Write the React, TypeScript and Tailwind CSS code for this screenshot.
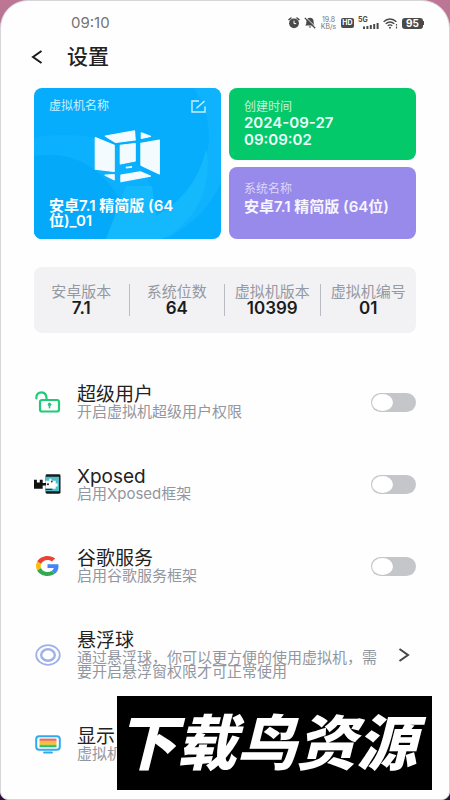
import type { ReactNode } from "react";

function AlarmIcon() {
  return (
    <svg width="12" height="12" viewBox="0 0 12 12" aria-hidden="true">
      <circle cx="6" cy="6.3" r="4.9" fill="#4a4a4a" />
      <path d="M1 2.6 3 1M11 2.6 9 1" stroke="#4a4a4a" strokeWidth="1.5" strokeLinecap="round" />
      <path d="M6 3.6v3h2.2" stroke="#fff" strokeWidth="1" fill="none" />
    </svg>
  );
}

function MutedBellIcon() {
  return (
    <svg width="12" height="12" viewBox="0 0 12 12" aria-hidden="true">
      <path d="M6 .8c2.3 0 3.6 1.6 3.6 3.8 0 2 .4 3 1.2 4H1.2c.8-1 1.2-2 1.2-4C2.4 2.4 3.7.8 6 .8z" fill="#4a4a4a" />
      <path d="M4.6 9.6h2.8L6 11z" fill="#4a4a4a" />
      <path d="M1.6.2 12 10.4" stroke="#fff" strokeWidth="1" />
      <path d="M.8.9 11.2 11.3" stroke="#4a4a4a" strokeWidth="1.3" />
    </svg>
  );
}

function SignalIcon() {
  return (
    <svg width="16" height="6" viewBox="0 0 16 6" fill="#4a4a4a" aria-hidden="true">
      <rect x="0" y="3.5" width="2" height="2.5" />
      <rect x="3.4" y="3" width="2" height="3" />
      <rect x="6.8" y="2" width="2" height="4" />
      <rect x="10.2" y="1" width="2" height="5" />
      <rect x="13.6" y="0" width="2" height="6" />
    </svg>
  );
}

function WifiIcon() {
  return (
    <svg width="15" height="11" viewBox="0 0 15 11" fill="none" stroke="#4a4a4a" strokeWidth="1.4" aria-hidden="true">
      <path d="M.6 3.7C4.4.1 9.6.1 13.4 3.7" />
      <path d="M2.7 5.8c2.6-2.3 6-2.3 8.6 0" />
      <path d="M4.7 7.8c1.500-1.200 3.100-1.200 4.600 0" />
      <circle cx="7" cy="9.7" r="1" fill="#4a4a4a" stroke="none" />
      <path d="M13.5 6v1.6M13.5 8.6v2" strokeWidth="1.2" />
    </svg>
  );
}

function EditIcon() {
  return (
    <svg width="15" height="13" viewBox="0 0 15 13" fill="none" stroke="#c9efff" strokeWidth="1.4" aria-hidden="true">
      <path d="M8 1H1v11h13V6.5" />
      <path d="M5.5 8.2 13.6 1" />
    </svg>
  );
}

function CubeLogo() {
  return (
    <svg width="68" height="54" viewBox="0 0 68 54" fill="#f3fbff" stroke="#f3fbff" strokeWidth="1.2" strokeLinejoin="round" aria-hidden="true">
      <path d="M1.3 8.6 20.2 16.2V42.5L1.3 40.2z" />
      <path d="M11.3 7 40.5 1.9 41.2 11 21.6 13.4z" />
      <path d="M47.3 3.9 56.5 7.4 47.3 9.4z" />
      <path d="M26.3 16.3 41.2 14.5V31.9L26.3 35z" />
      <path d="M46.9 14.3 65.3 11.2V45L46.9 36.3z" />
      <path d="M11 46.2 20.2 45.7V50.8z" />
      <path d="M26.9 46 46.3 42.9 56.5 47.1 26.9 52.6z" />
      <path d="M31.8 38.7 38 37.8" strokeWidth="1.8" />
    </svg>
  );
}

function UnlockIcon() {
  return (
    <svg width="26" height="22" viewBox="0 0 26 22" fill="none" stroke="#1fca78" strokeWidth="2.2" strokeLinecap="round" aria-hidden="true">
      <rect x="5" y="9" width="19" height="11.5" rx="2" />
      <path d="M1.4 7.5C1 3.2 3.6 1.4 6.6 1.4S11.6 3.2 11.6 8.5" />
      <circle cx="14.5" cy="13.4" r="1.3" fill="#1fca78" strokeWidth="1" />
      <path d="M14.5 14v2.8" strokeWidth="1.6" />
    </svg>
  );
}

function XposedIcon() {
  return (
    <svg width="28" height="22" viewBox="0 0 28 22" aria-hidden="true">
      <rect x="12" y="1" width="15.5" height="20" rx="1.5" fill="#171c1f" />
      <rect x="12" y="3.5" width="14" height="15" fill="#4fc0cb" />
      <path d="M12 7.5h4V5.500h2v2h4.500v3h2v3h-2V16H12z" fill="#fff" />
      <path d="M0 6.5h3v3h3v-3h3V10h3.500v2.500H9V16H0z" fill="#111" />
      <circle cx="14.500" cy="11.3" r="1.1" fill="#222" />
      <circle cx="18.5" cy="8.5" r=".9" fill="#222" />
      <path d="M12 16.5h7" stroke="#222" strokeWidth="1.2" />
    </svg>
  );
}

function GoogleIcon() {
  return (
    <svg width="23" height="20" viewBox="0 0 48 48" preserveAspectRatio="none" aria-hidden="true">
      <path fill="#EA4335" d="M24 9.5c3.54 0 6.71 1.22 9.21 3.6l6.85-6.85C35.9 2.38 30.47 0 24 0 14.62 0 6.51 5.38 2.56 13.22l7.98 6.19C12.43 13.72 17.74 9.5 24 9.5z" />
      <path fill="#4285F4" d="M46.98 24.55c0-1.57-.15-3.09-.38-4.55H24v9.02h12.94c-.58 2.96-2.26 5.48-4.78 7.18l7.73 6c4.51-4.18 7.09-10.36 7.09-17.65z" />
      <path fill="#FBBC05" d="M10.53 28.59c-.48-1.45-.76-2.99-.76-4.59s.27-3.14.76-4.59l-7.98-6.19C.92 16.46 0 20.12 0 24c0 3.88.92 7.54 2.56 10.78l7.97-6.19z" />
      <path fill="#34A853" d="M24 48c6.48 0 11.93-2.13 15.89-5.81l-7.73-6c-2.15 1.45-4.92 2.3-8.16 2.3-6.26 0-11.57-4.22-13.47-9.91l-7.98 6.19C6.51 42.62 14.62 48 24 48z" />
    </svg>
  );
}

function FloatingBallIcon() {
  return (
    <svg width="26" height="22" viewBox="0 0 26 22" fill="none" stroke="#9fb1ea" aria-hidden="true">
      <ellipse cx="13" cy="11" rx="11.8" ry="9.8" strokeWidth="1.8" />
      <ellipse cx="13" cy="11" rx="6.8" ry="5.7" strokeWidth="2.4" />
    </svg>
  );
}

function DisplayIcon() {
  return (
    <svg width="26" height="19" viewBox="0 0 26 19" aria-hidden="true">
      <rect x="1.2" y="1.2" width="23.6" height="13.6" rx="3" fill="#fff" stroke="#2eaaf0" strokeWidth="2" />
      <rect x="4.5" y="3.6" width="17" height="2.3" fill="#ef6a5a" />
      <rect x="4.5" y="5.9" width="17" height="2.2" fill="#f8b84a" />
      <rect x="4.5" y="8.1" width="17" height="2" fill="#c9cf45" />
      <rect x="4.5" y="10.1" width="17" height="2.2" fill="#35b877" />
      <path d="M9 17.5h8" stroke="#2eaaf0" strokeWidth="1.8" strokeLinecap="round" />
    </svg>
  );
}

type Item = {
  id: string;
  icon: ReactNode;
  title: string;
  text: string;
  control?: "switch" | "link";
};

const items: Item[] = [
  { id: "root", icon: <UnlockIcon />, title: "超级用户", text: "开启虚拟机超级用户权限", control: "switch" },
  { id: "xposed", icon: <XposedIcon />, title: "Xposed", text: "启用Xposed框架", control: "switch" },
  { id: "google", icon: <GoogleIcon />, title: "谷歌服务", text: "启用谷歌服务框架", control: "switch" },
  {
    id: "ball",
    icon: <FloatingBallIcon />,
    title: "悬浮球",
    text: "通过悬浮球，你可以更方便的使用虚拟机，需要开启悬浮窗权限才可正常使用",
    control: "link",
  },
  { id: "display", icon: <DisplayIcon />, title: "显示", text: "虚拟机" },
];

const facts = [
  ["安卓版本", "7.1"],
  ["系统位数", "64"],
  ["虚拟机版本", "10399"],
  ["虚拟机编号", "01"],
];

function StatusBar() {
  return (
    <div className="flex h-11 items-center justify-between pr-[25px] pl-[70px] text-[#4a4a4a]">
      <span className="text-[15px] text-[#737373]">09:10</span>
      <div className="flex items-center gap-1">
        <AlarmIcon />
        <MutedBellIcon />
        <span className="flex w-[17px] flex-col text-center text-[7px] leading-[7px] text-[#777]">
          <span>19.8</span>
          <span>KB/s</span>
        </span>
        <span className="flex h-[10px] w-[13px] items-center justify-center rounded-[2px] bg-[#4a4a4a] text-[7px] font-bold text-white">
          HD
        </span>
        <span className="flex w-[21px] flex-col">
          <span className="text-[7px] leading-[6px] font-bold">5G</span>
          <span className="flex justify-end">
            <SignalIcon />
          </span>
        </span>
        <WifiIcon />
        <span className="flex items-center">
          <span className="flex h-[11px] w-[21px] items-center justify-center rounded-[3px] bg-[#4a4a4a] text-[10px] font-bold text-white">
            95
          </span>
          <span className="h-1 w-px bg-[#4a4a4a]" />
        </span>
      </div>
    </div>
  );
}

function Row({ item }: { item: Item }) {
  const body = (
    <>
      <span className="flex w-[27px] shrink-0 justify-center">{item.icon}</span>
      <span className="flex w-[300px] flex-col text-left">
        <span className="text-[19px] leading-5 text-[#222]">{item.title}</span>
        <span className="text-[15px] leading-[14px] text-[#9296a0]">{item.text}</span>
      </span>
    </>
  );
  if (item.control === "switch") {
    return (
      <li className="flex items-center py-6">
        <label htmlFor={item.id} className="flex min-w-0 flex-1 items-center gap-4">
          {body}
        </label>
        <input
          id={item.id}
          type="checkbox"
          role="switch"
          className="h-[19px] w-[45px] shrink-0 appearance-none rounded-full bg-[#c4c6ca] p-px before:block before:h-[17px] before:w-[21px] before:rounded-[50%] before:bg-white checked:bg-[#1fca78] checked:before:translate-x-[22px]"
        />
      </li>
    );
  }
  return (
    <li>
      <button type="button" className="flex w-full items-center gap-4 py-6">
        {body}
        {item.control === "link" && (
          <svg className="mr-1.5 ml-auto shrink-0" width="12" height="14" viewBox="0 0 12 14" fill="none" stroke="#444" strokeWidth="2" aria-hidden="true">
            <path d="M1.5 1 10 7 1.5 13" />
          </svg>
        )}
      </button>
    </li>
  );
}

export default function App() {
  return (
    <div className="relative min-h-screen bg-linear-to-b from-[#bd7696] to-[#2a1238] font-['Inter','Noto_Sans_CJK_SC',sans-serif]">
      <div className="min-h-screen overflow-hidden rounded-t-[28px] rounded-b-lg border border-[#d6d6d8] bg-[#fefefe]">
        <StatusBar />
        <header className="flex h-6 items-center gap-6 pl-[30px]">
          <button type="button" aria-label="返回" className="flex">
            <svg width="12" height="14" viewBox="0 0 12 14" fill="none" stroke="#1a1a1a" strokeWidth="2" aria-hidden="true">
              <path d="M10.5 1 2 7l8.5 6" />
            </svg>
          </button>
          <h1 className="text-[21px] leading-6 font-medium text-[#222]">设置</h1>
        </header>

        <main className="flex flex-col gap-7 px-[33px] pt-[19px]">
          <section className="grid grid-cols-2 gap-2">
            <div className="relative flex flex-col justify-between overflow-hidden rounded-lg bg-[#06adfd] px-[15px] py-[11px] text-white">
              <svg className="absolute inset-0 h-full w-full" viewBox="0 0 187 151" preserveAspectRatio="none" aria-hidden="true">
                <path d="M0 50C60 38 108 60 120 110L122 151H0z" fill="#0bb1fe" />
                <path d="M0 68C38 62 66 78 88 114L74 151H0z" fill="#05a9f9" />
                <path d="M160 0C188 44 176 92 128 130L132 151C160 136 178 116 187 94V0z" fill="#0fb3fd" />
                <path d="M92 98h26l4 30C150 112 166 90 172 60 180 100 160 136 128 151H72z" fill="#14b8fc" />
              </svg>
              <div className="relative flex items-center justify-between">
                <span className="text-xs leading-[14px] text-[#c9efff]">虚拟机名称</span>
                <button type="button" aria-label="编辑名称" className="flex">
                  <EditIcon />
                </button>
              </div>
              <div className="relative flex justify-center">
                <CubeLogo />
              </div>
              <p className="relative text-[15px] leading-[15px] font-semibold">安卓7.1 精简版 (64位)_01</p>
            </div>
            <div className="grid grid-rows-2 gap-[7px]">
              <div className="h-[72px] rounded-lg bg-[#03c96b] px-[15px] pt-3">
                <h2 className="text-xs leading-[14px] text-[#c3f3d9]">创建时间</h2>
                <p className="text-[15px] leading-[17px] font-semibold text-[#effff6]">2024-09-27 09:09:02</p>
              </div>
              <div className="h-[72px] rounded-lg bg-[#978aeb] px-[15px] pt-[15px]">
                <h2 className="text-xs leading-[14px] text-[#dcd6fb]">系统名称</h2>
                <p className="mt-0.5 text-[15px] leading-[17px] font-semibold text-[#f7f5ff]">安卓7.1 精简版 (64位)</p>
              </div>
            </div>
          </section>

          <dl className="grid grid-cols-4 divide-x divide-[#b9bcc2] rounded-lg bg-[#f2f2f4] py-[17px] text-center">
            {facts.map(([label, value]) => (
              <div key={label} className="whitespace-nowrap">
                <dt className="text-[15px] leading-4 text-[#9599a2]">{label}</dt>
                <dd className="text-[17px] leading-4 font-semibold text-[#1c1c1c]">{value}</dd>
              </div>
            ))}
          </dl>

          <ul className="flex flex-col">
            {items.map((item) => (
              <Row key={item.id} item={item} />
            ))}
          </ul>
        </main>
      </div>

      <div className="absolute right-[18px] bottom-[10px] flex h-[94px] w-[315px] items-center justify-center bg-black pr-4">
        <span className="text-[60px] leading-none font-black whitespace-nowrap text-white italic">下载鸟资源</span>
      </div>
    </div>
  );
}
